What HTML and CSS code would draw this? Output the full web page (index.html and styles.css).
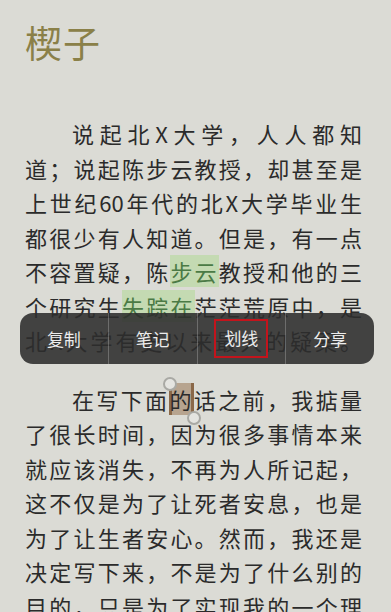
FILE: index.html
```html
<!DOCTYPE html>
<html lang="zh-CN">
<head>
  <meta charset="UTF-8">
  <meta name="viewport" content="width=device-width, initial-scale=1.0">
  <title>楔子</title>
  <link rel="stylesheet" href="styles.css">
</head>
<body>

<div class="page">
  <h1 class="chapter">楔子</h1>

  <p class="para">
    <span class="ln first">说起北X大学，人人都知</span>
    <span class="ln">道；说起陈步云教授，却甚至是</span>
    <span class="ln">上世纪60年代的北X大学毕业生</span>
    <span class="ln">都很少有人知道。但是，有一点</span>
    <span class="ln">不容置疑，陈<span class="mark">步云</span>教授和他的三</span>
    <span class="ln">个研究生<span class="mark">失踪在</span>茫茫荒原中，是</span>
    <span class="ln">北X大学有史以来最大的疑案。</span>
  </p>

  <p class="para">
    <span class="ln first">在写下面<span class="sel">的</span>话之前，我掂量</span>
    <span class="ln">了很长时间，因为很多事情本来</span>
    <span class="ln">就应该消失，不再为人所记起，</span>
    <span class="ln">这不仅是为了让死者安息，也是</span>
    <span class="ln">为了让生者安心。然而，我还是</span>
    <span class="ln">决定写下来，不是为了什么别的</span>
    <span class="ln">目的，只是为了实现我的一个理</span>
  </p>

  <div class="toolbar">
    <div class="tool">复制</div>
    <div class="tool">笔记</div>
    <div class="tool"><span class="picked">划线</span></div>
    <div class="tool">分享</div>
  </div>
</div>

</body>
</html>
```

FILE: styles.css
```css
html, body {
  margin: 0;
  padding: 0;
}
body {
  background-color: #dbdbd5;
  font-family: "Noto Sans CJK SC", "Noto Sans", sans-serif;
  color: #2b2b2b;
}
.page {
  position: relative;
  width: 391px;
  height: 612px;
  overflow: hidden;
  padding: 0 29px 0 25px;
  box-sizing: border-box;
}
.chapter {
  margin: 0;
  padding-top: 14px;
  font-size: 37px;
  line-height: 56px;
  font-weight: normal;
  color: #8a8048;
  letter-spacing: 1px;
}
.para {
  margin: 0;
  font-size: 22px;
  line-height: 34.5px;
}
.para + .para {
  margin-top: 24px;
}
.chapter + .para {
  margin-top: 46px;
}
.ln {
  display: block;
  text-align: justify;
  text-align-last: justify;
  white-space: nowrap;
}
.first {
  padding-left: 47px;
}
.mark {
  background-color: #c4dab2;
  color: #4b7a45;
}
.sel {
  position: relative;
  background-color: rgba(140, 98, 58, 0.45);
  box-shadow: inset 3px 0 0 #8a6848, inset -3px 0 0 #8a6848;
}
.sel::before,
.sel::after {
  content: "";
  position: absolute;
  width: 10px;
  height: 10px;
  border-radius: 50%;
  background-color: #e4e4e0;
  border: 2px solid #a9a9a4;
}
.sel::before {
  left: -6px;
  top: -6px;
}
.sel::after {
  right: -7px;
  bottom: -10px;
}
.toolbar {
  position: absolute;
  left: 20px;
  top: 313px;
  width: 354px;
  height: 51px;
  display: flex;
  border-radius: 13px;
  background-color: rgba(44, 44, 44, 0.88);
  overflow: hidden;
}
.tool {
  flex: 1;
  display: flex;
  align-items: center;
  justify-content: center;
  font-size: 17px;
  color: #ececec;
}
.tool + .tool {
  border-left: 1px solid rgba(190, 190, 190, 0.35);
}
.picked {
  display: inline-block;
  padding: 5px 8px 6px;
  border: 2px solid #c3141c;
  line-height: 24px;
}
```
